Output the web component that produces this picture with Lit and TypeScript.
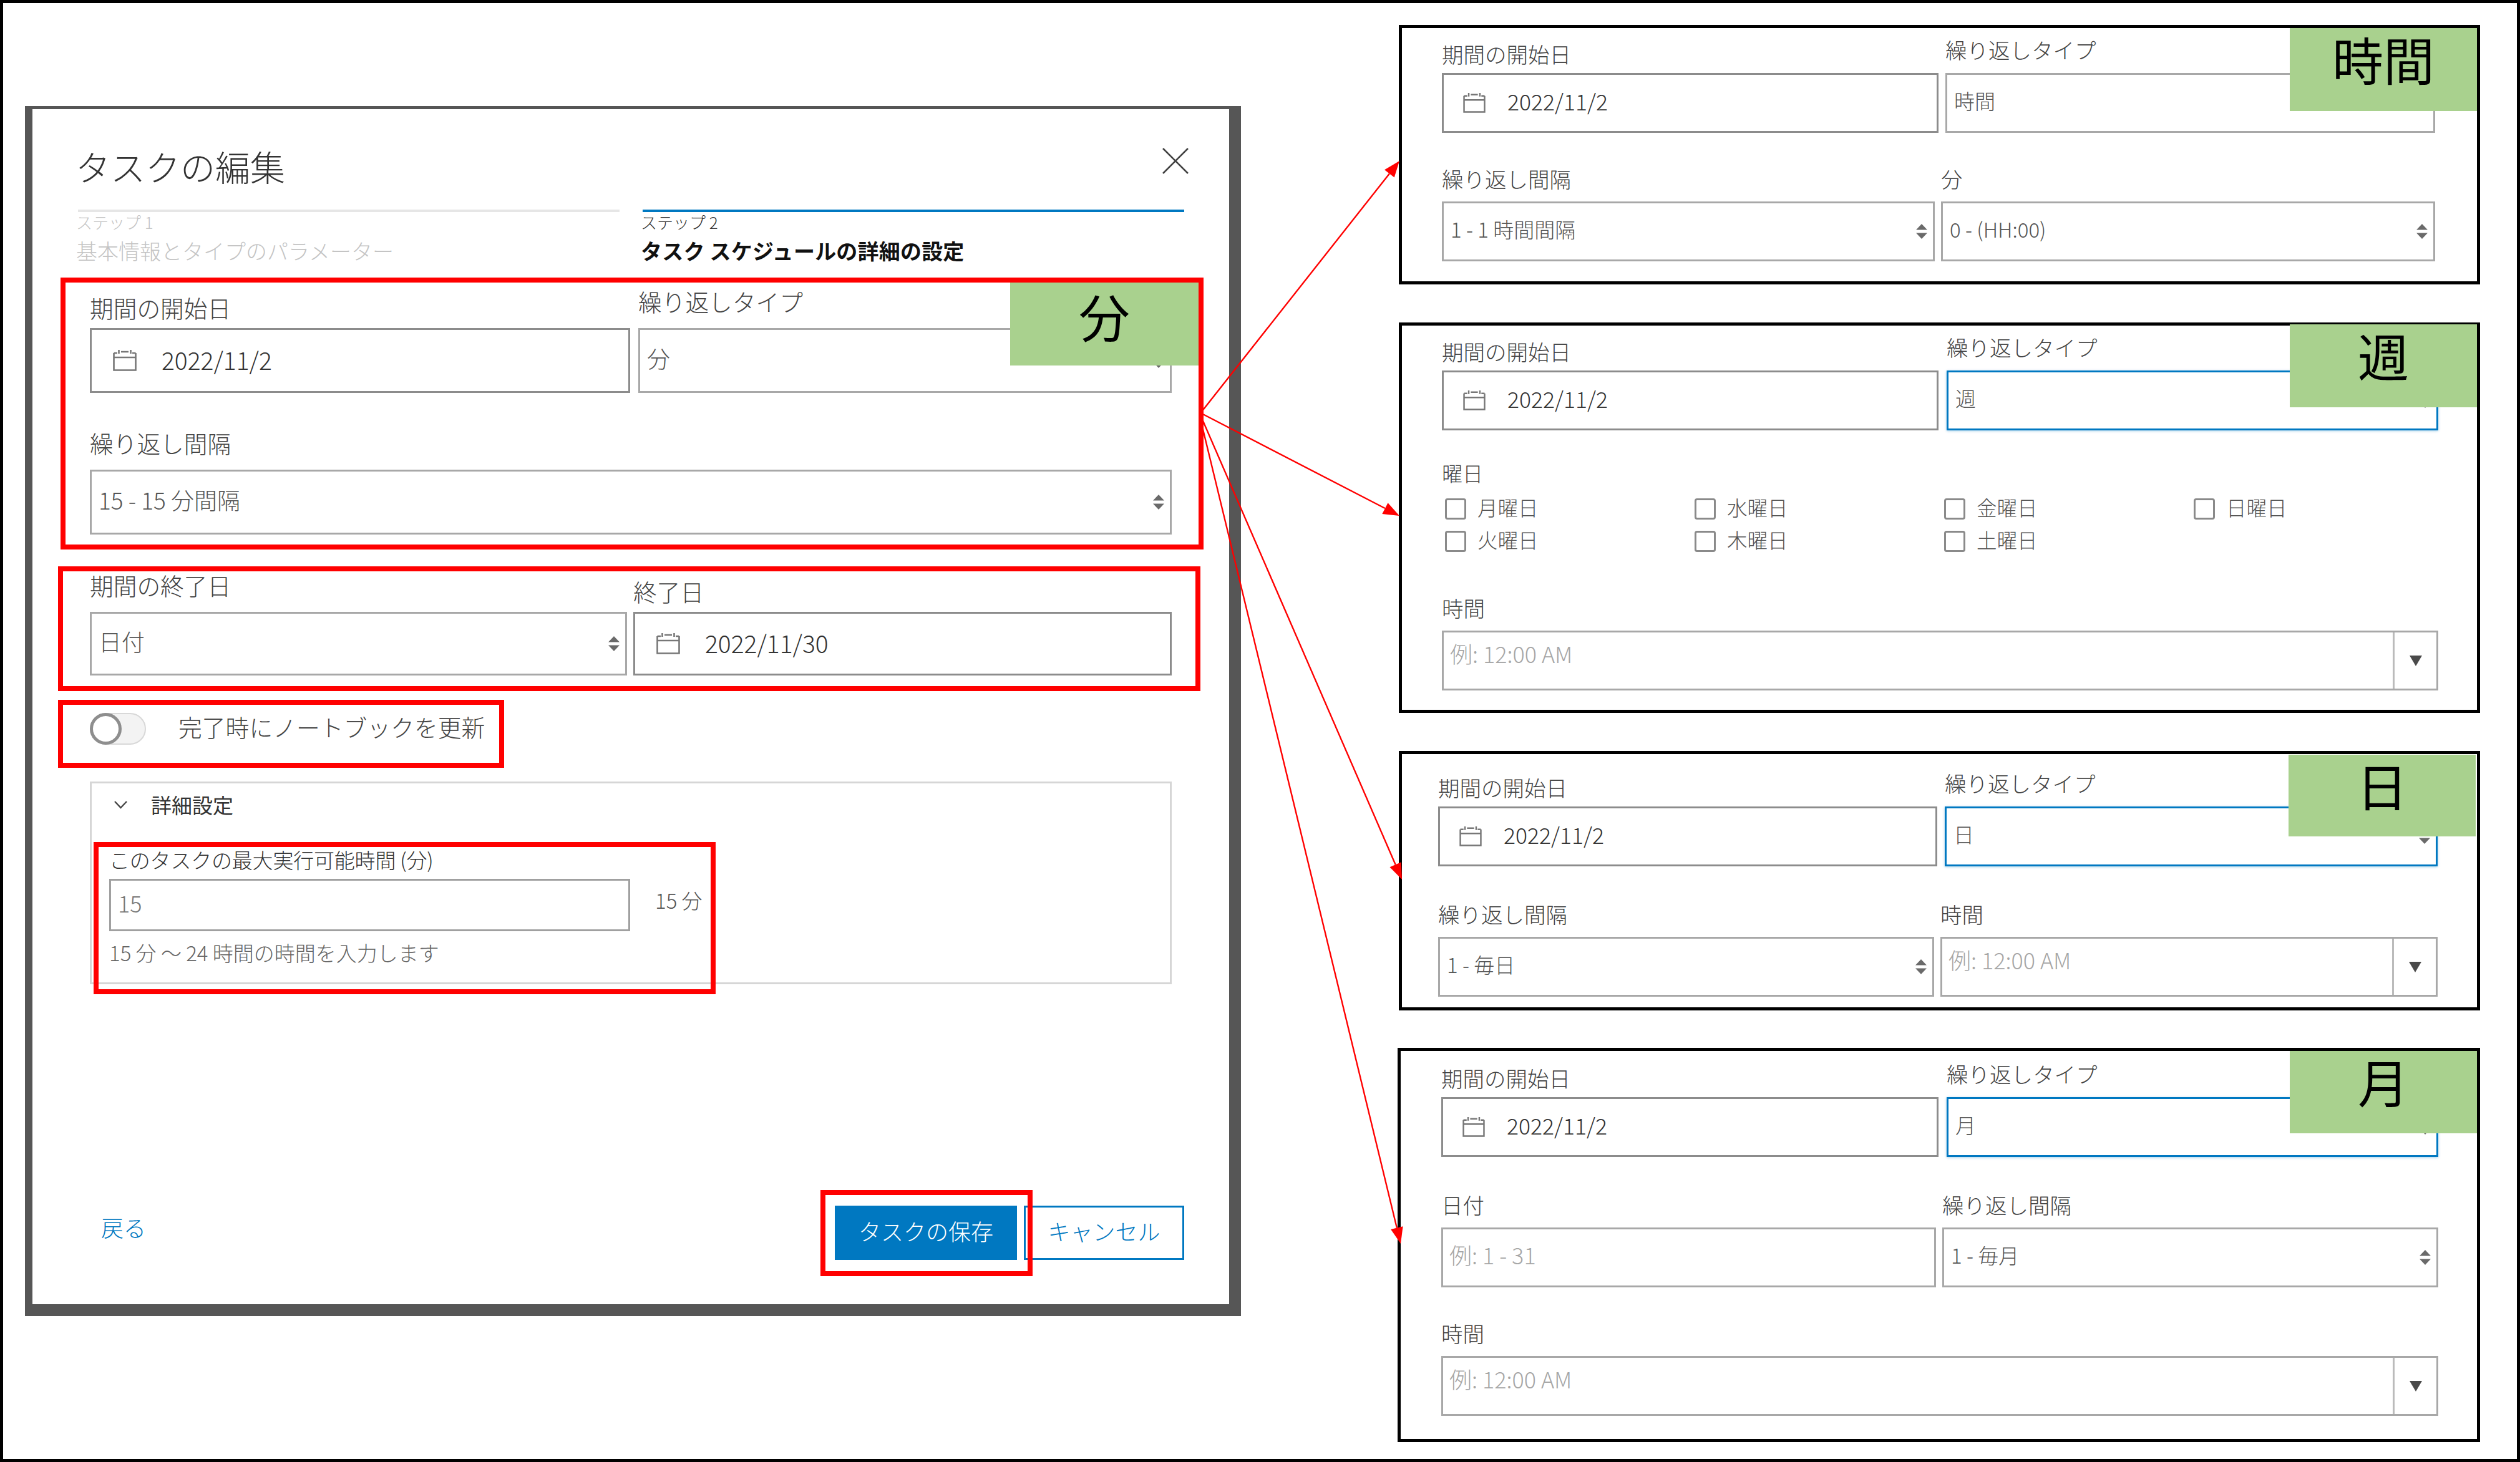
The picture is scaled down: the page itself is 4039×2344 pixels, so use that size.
import { LitElement, html, css, svg } from "lit";
import { customElement } from "lit/decorators.js";

type Kind = "date" | "select" | "combo" | "text";
interface Ctl { kind: Kind; value: string; focus?: boolean }

const dateIcon = () => html`<svg class="cal" viewBox="0 0 38 34" fill="none" stroke="#777" stroke-width="2.6"><path d="M1.5 5V32.5H36.5V5M1.5 5H7M31 5H36.5M13 3H25M9.5 0V6M28.5 0V6M1.5 12H36.5"/></svg>`;

const spinner = () => html`<svg class="spin" viewBox="0 0 20 24" width="20" height="24" fill="#6a6a6a"><path d="M10 0L19 9.5H1Z"/><path d="M10 24L19 14.5H1Z"/></svg>`;

@customElement("app-root")
export class AppRoot extends LitElement {
  static styles = css`
    :host { display: block; width: 4039px; height: 2344px; font-family: "Noto Sans CJK JP", "Noto Sans", sans-serif; font-weight: 300; color: #444; }
    .canvas { position: relative; width: 4039px; height: 2344px; background: #fff; overflow: hidden; box-shadow: inset 0 0 0 5px #000; }
    .win { position: absolute; box-sizing: border-box; background: #fff; }

    .dialog { left: 40px; top: 170px; width: 1949px; height: 1940px; border: solid #565656; border-width: 5px 19px 19px 12px; padding: 0 72px 0 73px; display: flex; flex-direction: column; }
    .dhead { display: flex; justify-content: space-between; align-items: flex-start; height: 161px; }
    .dhead h1 { margin: 56px 0 0 -4px; font-size: 56px; line-height: 70px; font-weight: 300; color: #333; }
    .close { margin: 62px -7px 0 0; }
    .steps { display: grid; grid-template-columns: 868px 868px; column-gap: 37px; }
    .step { border-top: 4px solid #e6e6e6; }
    .step.on { border-color: #0078c1; }
    .step small { display: block; font-size: 26px; line-height: 28px; margin: 2px 0 0 -3px; color: #c4c4c4; }
    .step b { display: block; font-size: 34px; line-height: 40px; margin: 12px 0 2px -3px; font-weight: 300; color: #c4c4c4; }
    .step.on small { color: #333; }
    .step.on b { color: #111; font-weight: 700; letter-spacing: .2px; }

    .body { padding: 0 0 0 19px; width: 1734px; }
    .row { display: grid; align-items: end; }
    label { display: block; font-size: 37.7px; line-height: 46px; color: #444; white-space: nowrap; }
    .ctl { box-sizing: border-box; display: flex; align-items: center; background: #fff; border: 3px solid #a8a8a8; font-size: 37px; color: #555; white-space: nowrap; }
    .ctl.date { border-color: #8c8c8c; padding-left: 34px; gap: 40px; color: #333; font-size: 39px; }
    .ctl.date span { margin-bottom: 5px; }
    .cal { width: 38px; height: 34px; flex: none; }
    .ctl.select { padding: 0 8px 0 11px; justify-content: space-between; }
    .ctl.select span { margin-bottom: 8px; }
    .ctl.text, .ctl.combo { padding-left: 10px; }
    .ctl.focus { border-color: #0078c1; box-shadow: 0 1px 4px rgba(0,120,193,.35); }
    .ph { color: #a6a6a6; }
    .combo span { flex: 1; margin-bottom: 24px; }
    .combo .drop { flex: none; align-self: stretch; width: 67px; border-left: 3px solid #bbb; display: flex; align-items: center; justify-content: center; }
    .combo .drop i { width: 0; height: 0; border: solid transparent; border-width: 17px 10px 0; border-top-color: #4a4a4a; }

    .d-a { grid-template-columns: 866px 855px; column-gap: 13px; margin-top: 36px; }
    .d-a .ctl { height: 104px; }
    .d-a .la { margin-bottom: 10px; }
    .d-a .lb2 { margin-bottom: 20px; }
    .d-b { margin-top: 57px; }
    .d-b .ctl { height: 104px; }
    .d-b label { margin-bottom: 20px; }
    .d-c { grid-template-columns: 861px 863px; column-gap: 10px; margin-top: 58px; }
    .d-c .ctl { height: 102px; }
    .d-c .la { margin-bottom: 20px; }
    .d-c .lb2 { margin-bottom: 10px; }

    .toggle-row { display: flex; align-items: center; gap: 52px; margin-top: 60px; height: 51px; font-size: 37.8px; }
    .toggle-row span { margin-bottom: 8px; }
    .toggle { box-sizing: border-box; width: 90px; height: 51px; border-radius: 26px; border: 2px solid #d8d8d8; background: #f3f3f3; position: relative; flex: none; }
    .toggle i { position: absolute; box-sizing: border-box; left: -2px; top: -2px; width: 51px; height: 51px; border-radius: 50%; border: 5px solid #8e8e8e; background: #fff; }

    .adv { box-sizing: border-box; height: 325px; margin-top: 59px; border: 3px solid #d6d6d6; padding: 14px 0 0 28px; }
    .adv-h { display: flex; align-items: center; gap: 38px; font-size: 33px; line-height: 40px; color: #333; font-weight: 400; padding-left: 8px; }
    .adv-l { font-size: 33px; line-height: 40px; margin-top: 48px; color: #333; letter-spacing: -.2px; }
    .adv-r { display: flex; align-items: center; gap: 40px; margin-top: 11px; font-size: 33px; }
    .adv-r .ctl { width: 835px; height: 84px; color: #777; font-size: 36px; padding: 0 0 8px 11px; border-color: #a0a0a0; }
    .adv-r span { margin-bottom: 16px; color: #555; }
    .adv-hint { font-size: 33px; line-height: 40px; margin-top: 14px; color: #666; }

    .foot { display: flex; align-items: center; margin-top: auto; margin-bottom: 71px; font-size: 36px; padding-left: 37px; }
    .foot a { color: #0078c1; margin: 0 auto 20px 0; }
    .btn { box-sizing: border-box; height: 87px; display: flex; align-items: center; justify-content: center; font-size: 36px; padding-bottom: 8px; }
    .btn.pri { width: 292px; background: #0078c1; color: #fff; margin-right: 11px; }
    .btn.sec { width: 257px; border: 3px solid #0078c1; color: #0078c1; background: #fff; }

    .panel { left: 2242px; width: 1733px; border: 5px solid #000; }
    .panel .ctl { height: 96px; font-size: 33px; }
    .panel .ctl.combo span { font-size: 36px; }
    .panel .ctl.text span { font-size: 36px; margin-bottom: 10px; }
    .panel .ctl.date { gap: 35px; color: #333; padding-left: 31px; font-size: 35.5px; }
    .panel .ctl.date span { margin-bottom: 8px; }
    .panel .cal { width: 36px; height: 32px; }
    .panel label { font-size: 34.5px; line-height: 42px; }
    .panel .la { margin-bottom: 10px; }
    .panel .lb2 { margin-bottom: 17px; }
    .panel .lc { margin-bottom: 16px; }

    .p1 { top: 40px; height: 416px; }
    .p1 .inner { padding: 13px 0 0 64px; width: 1593px; }
    .p2 { top: 517px; height: 626px; }
    .p2 .inner { padding: 13px 0 0 64px; width: 1597px; }
    .p3 { top: 1204px; height: 416px; }
    .p3 .inner { padding: 25px 0 0 58px; width: 1602px; }
    .p4 { top: 1680px; height: 632px; left: 2240px; width: 1735px; }
    .p4 .inner { padding: 15px 0 0 65px; width: 1598px; }

    .gap-m { margin-top: 55px; }
    .gap-s { margin-top: 52px; }
    .days-l { font-size: 33px; line-height: 40px; margin: 48px 0 0; color: #444; }
    .days { display: grid; grid-template-columns: repeat(4, 400px); row-gap: 18px; margin: 20px 0 0 5px; }
    .day { display: flex; align-items: center; gap: 18px; font-size: 32.5px; height: 34px; color: #555; }
    .day span { margin-bottom: 5px; }
    .day i { box-sizing: border-box; width: 34px; height: 34px; border: 3px solid #8a8a8a; border-radius: 4px; flex: none; transform: translateY(1px); }
    .sp-time { margin-top: 69px; }

    .tag { position: absolute; background: #a9d18e; color: #000; display: flex; align-items: center; justify-content: center; font-size: 82px; font-weight: 400; line-height: 1; box-sizing: border-box; }
    .box { position: absolute; box-sizing: border-box; border: 8px solid #f00; }
    .arrows { position: absolute; left: 0; top: 0; pointer-events: none; }
  `;

  private ctl(c: Ctl) {
    const cls = `ctl ${c.kind}${c.focus ? " focus" : ""}`;
    if (c.kind === "date") return html`<div class=${cls}>${dateIcon()}<span>${c.value}</span></div>`;
    if (c.kind === "select") return html`<div class=${cls}><span>${c.value}</span>${spinner()}</div>`;
    if (c.kind === "combo") return html`<div class=${cls}><span class="ph">${c.value}</span><div class="drop"><i></i></div></div>`;
    return html`<div class=${cls}><span class="ph">${c.value}</span></div>`;
  }

  private typeRow(type: string, focus: boolean, cols: string) {
    return html`<div class="row" style="grid-template-columns:${cols}">
      <div><label class="la">期間の開始日</label>${this.ctl({ kind: "date", value: "2022/11/2" })}</div>
      <div><label class="lb2">繰り返しタイプ</label>${this.ctl({ kind: "select", value: type, focus })}</div>
    </div>`;
  }

  private tag(text: string, left: number, top: number, w: number, h: number, pb: number) {
    return html`<div class="tag" style="left:${left}px;top:${top}px;width:${w}px;height:${h}px;padding-bottom:${pb}px">${text}</div>`;
  }

  private box(l: number, t: number, r: number, b: number) {
    return html`<div class="box" style="left:${l}px;top:${t}px;width:${r - l}px;height:${b - t}px"></div>`;
  }

  private dialog() {
    return html`<section class="win dialog">
      <header class="dhead">
        <h1>タスクの編集</h1>
        <svg class="close" width="42" height="42" viewBox="0 0 42 42" stroke="#444" stroke-width="2.6" fill="none"><path d="M1 1L41 41M41 1L1 41"/></svg>
      </header>
      <div class="steps">
        <div class="step"><small>ステップ 1</small><b>基本情報とタイプのパラメーター</b></div>
        <div class="step on"><small>ステップ 2</small><b>タスク スケジュールの詳細の設定</b></div>
      </div>
      <div class="body">
        <div class="row d-a">
          <div><label class="la">期間の開始日</label>${this.ctl({ kind: "date", value: "2022/11/2" })}</div>
          <div><label class="lb2">繰り返しタイプ</label>${this.ctl({ kind: "select", value: "分" })}</div>
        </div>
        <div class="d-b"><label>繰り返し間隔</label>${this.ctl({ kind: "select", value: "15 - 15 分間隔" })}</div>
        <div class="row d-c">
          <div><label class="la">期間の終了日</label>${this.ctl({ kind: "select", value: "日付" })}</div>
          <div><label class="lb2">終了日</label>${this.ctl({ kind: "date", value: "2022/11/30" })}</div>
        </div>
        <div class="toggle-row"><div class="toggle"><i></i></div><span>完了時にノートブックを更新</span></div>
        <div class="adv">
          <div class="adv-h"><svg width="21" height="13" viewBox="0 0 21 13" fill="none" stroke="#444" stroke-width="2.4"><path d="M1 1L10.5 11L20 1"/></svg>詳細設定</div>
          <div class="adv-l">このタスクの最大実行可能時間 (分)</div>
          <div class="adv-r"><div class="ctl">15</div><span>15 分</span></div>
          <div class="adv-hint">15 分 ～ 24 時間の時間を入力します</div>
        </div>
      </div>
      <footer class="foot"><a>戻る</a><div class="btn pri">タスクの保存</div><div class="btn sec">キャンセル</div></footer>
    </section>`;
  }

  private panels() {
    const days = ["月曜日", "水曜日", "金曜日", "日曜日", "火曜日", "木曜日", "土曜日"];
    return html`
      <section class="win panel p1"><div class="inner">
        ${this.typeRow("時間", false, "796px 785px;column-gap:11px")}
        <div class="row gap-s" style="grid-template-columns:790px 792px;column-gap:10px">
          <div><label class="lc">繰り返し間隔</label>${this.ctl({ kind: "select", value: "1 - 1 時間間隔" })}</div>
          <div><label class="lc">分</label>${this.ctl({ kind: "select", value: "0 - (HH:00)" })}</div>
        </div>
      </div></section>
      <section class="win panel p2"><div class="inner">
        ${this.typeRow("週", true, "796px 788px;column-gap:13px")}
        <div class="days-l">曜日</div>
        <div class="days">${days.map((d) => html`<div class="day"><i></i><span>${d}</span></div>`)}</div>
        <div class="sp-time"><label class="lc">時間</label>${this.ctl({ kind: "combo", value: "例: 12:00 AM" })}</div>
      </div></section>
      <section class="win panel p3"><div class="inner">
        ${this.typeRow("日", true, "800px 790px;column-gap:12px")}
        <div class="row gap-m" style="grid-template-columns:795px 797px;column-gap:10px">
          <div><label class="lc">繰り返し間隔</label>${this.ctl({ kind: "select", value: "1 - 毎日" })}</div>
          <div><label class="lc">時間</label>${this.ctl({ kind: "combo", value: "例: 12:00 AM" })}</div>
        </div>
      </div></section>
      <section class="win panel p4"><div class="inner">
        ${this.typeRow("月", true, "797px 788px;column-gap:13px")}
        <div class="row gap-m" style="grid-template-columns:793px 795px;column-gap:10px">
          <div><label class="lc">日付</label>${this.ctl({ kind: "text", value: "例: 1 - 31" })}</div>
          <div><label class="lc">繰り返し間隔</label>${this.ctl({ kind: "select", value: "1 - 毎月" })}</div>
        </div>
        <div class="gap-s"><label class="lc">時間</label>${this.ctl({ kind: "combo", value: "例: 12:00 AM" })}</div>
      </div></section>`;
  }

  private arrows() {
    const lines: [number, number, number, number][] = [
      [1926, 660, 2243, 258],
      [1926, 663, 2243, 827],
      [1926, 670, 2247, 1410],
      [1926, 680, 2245, 1994],
    ];
    return html`<svg class="arrows" width="4039" height="2344" viewBox="0 0 4039 2344">
      ${lines.map(([x1, y1, x2, y2]) => {
        const a = Math.atan2(y2 - y1, x2 - x1);
        const L = 26, W = 10;
        const bx = x2 - L * Math.cos(a), by = y2 - L * Math.sin(a);
        const nx = -Math.sin(a) * W, ny = Math.cos(a) * W;
        return svg`<line x1=${x1} y1=${y1} x2=${bx} y2=${by} stroke="#f00" stroke-width="2.4"/>
          <polygon fill="#f00" points="${x2},${y2} ${bx + nx},${by + ny} ${bx - nx},${by - ny}"/>`;
      })}
    </svg>`;
  }

  render() {
    return html`<div class="canvas">
      ${this.dialog()}
      ${this.panels()}
      ${this.tag("分", 1619, 452, 302, 134, 26)}
      ${this.tag("時間", 3670, 45, 300, 133, 36)}
      ${this.tag("週", 3670, 520, 300, 133, 36)}
      ${this.tag("日", 3668, 1210, 300, 131, 36)}
      ${this.tag("月", 3670, 1685, 300, 132, 36)}
      ${this.box(97, 445, 1929, 881)}
      ${this.box(93, 908, 1924, 1108)}
      ${this.box(93, 1122, 808, 1231)}
      ${this.box(150, 1350, 1147, 1594)}
      ${this.box(1315, 1908, 1655, 2046)}
      ${this.arrows()}
    </div>`;
  }
}
